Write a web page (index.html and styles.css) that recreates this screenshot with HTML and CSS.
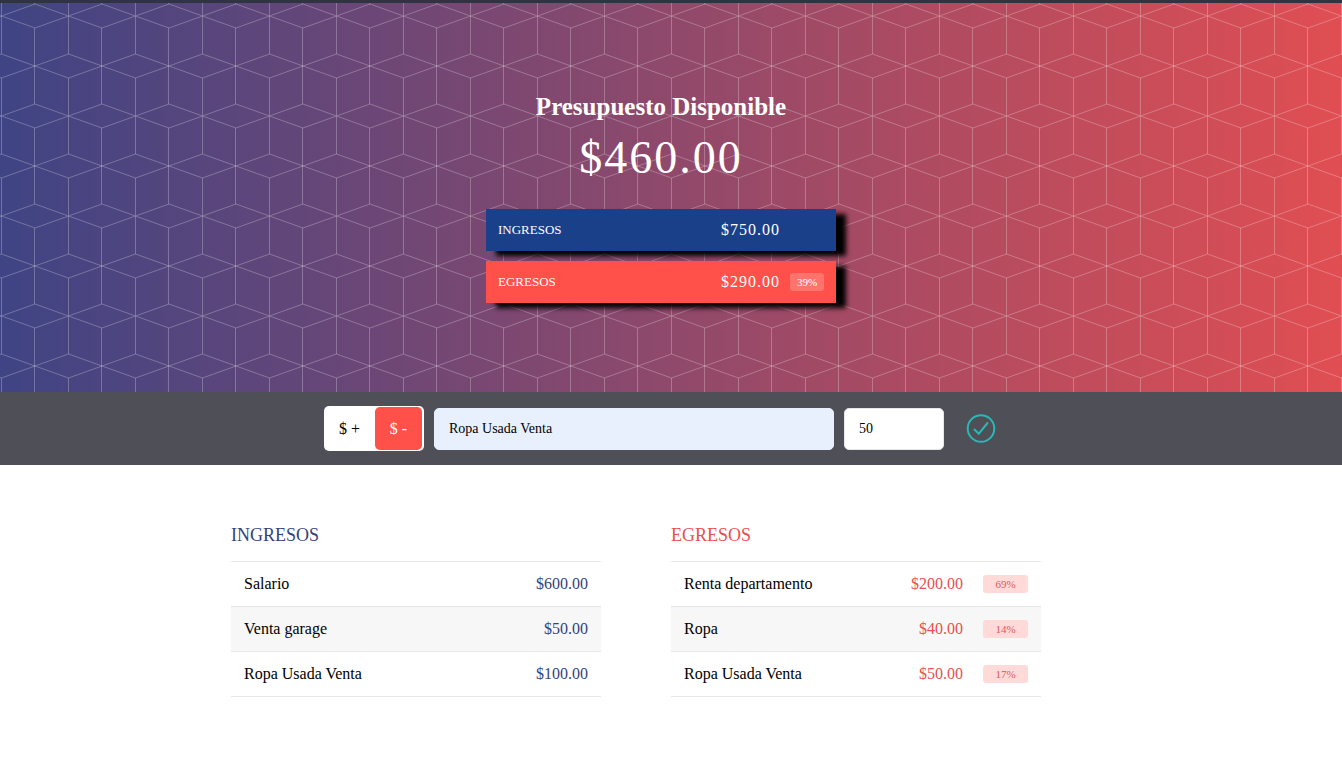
FILE: index.html
```html
<!DOCTYPE html>
<html lang="es">
<head>
<meta charset="utf-8">
<title>Presupuesto</title>
<link rel="stylesheet" href="styles.css">
</head>
<body>
<header class="hero">
  <svg class="hero-pattern" aria-hidden="true">
    <defs>
      <pattern id="cubes" width="67" height="100" patternUnits="userSpaceOnUse" x="1" y="13">
        <path d="M0.5 0L34 -12L67.5 0L34 12ZM0.5 100L34 88L67.5 100M-33 50L0.5 38L34 50L0.5 62ZM34 50L67.5 38L101 50L67.5 62Z M0.5 0V38M0.5 62V100M33.5 12V88" fill="none" stroke="#fff" stroke-opacity=".25"/>
      </pattern>
    </defs>
    <rect width="100%" height="100%" fill="url(#cubes)"/>
  </svg>
  <div class="summary">
    <h1 class="summary-title">Presupuesto Disponible</h1>
    <div class="summary-total">$460.00</div>
    <div class="bar bar-income">
      <div class="bar-label">INGRESOS</div>
      <div class="bar-value">$750.00</div>
    </div>
    <div class="bar bar-expense">
      <div class="bar-label">EGRESOS</div>
      <div class="bar-value">$290.00</div>
      <div class="bar-percent">39%</div>
    </div>
  </div>
</header>

<form class="entry">
  <div class="kind" role="radiogroup" aria-label="Tipo">
    <label class="kind-option"><input type="radio" name="kind" value="ingreso"><span class="kind-text">$ +</span></label>
    <label class="kind-option"><input type="radio" name="kind" value="egreso" checked><span class="kind-text">$ -</span></label>
  </div>
  <input class="field field-description" type="text" aria-label="Descripción" value="Ropa Usada Venta">
  <input class="field field-amount" type="text" inputmode="decimal" aria-label="Valor" value="50">
  <button class="submit" type="button" aria-label="Agregar">
    <svg width="30" height="30" viewBox="0 0 30 30" fill="none" stroke="#28b9b5" stroke-width="2" stroke-linecap="round" stroke-linejoin="round">
      <circle cx="15" cy="14.5" r="13.3"/>
      <path d="M8.5 15.5L12.7 19.8L21.5 9"/>
    </svg>
  </button>
</form>

<main class="lists">
  <section class="list list-income">
    <h2 class="list-title">INGRESOS</h2>
    <table class="items">
      <tr><td>Salario</td><td class="amount">$600.00</td></tr>
      <tr><td>Venta garage</td><td class="amount">$50.00</td></tr>
      <tr><td>Ropa Usada Venta</td><td class="amount">$100.00</td></tr>
    </table>
  </section>
  <section class="list list-expense">
    <h2 class="list-title">EGRESOS</h2>
    <table class="items">
      <tr><td>Renta departamento</td><td class="amount">$200.00</td><td class="share"><span class="tag">69%</span></td></tr>
      <tr><td>Ropa</td><td class="amount">$40.00</td><td class="share"><span class="tag">14%</span></td></tr>
      <tr><td>Ropa Usada Venta</td><td class="amount">$50.00</td><td class="share"><span class="tag">17%</span></td></tr>
    </table>
  </section>
</main>
</body>
</html>
```
FILE: styles.css
```css
* {
  box-sizing: border-box;
}

body {
  margin: 0;
  background: #fff;
  color: #000;
  font: 16px/20px "Liberation Serif", "Times New Roman", serif;
}

.hero {
  position: relative;
  border-top: 3px solid #303342;
  padding: 89px 20px 89px 0;
  background: linear-gradient(to right, #3f4484, #e04e52);
  color: #fff;
}

.hero-pattern {
  position: absolute;
  inset: 0;
  width: 100%;
  height: 100%;
}

.summary {
  position: relative;
  width: 350px;
  margin: 0 auto;
}

.summary-title {
  margin: 0 0 10px;
  font-size: 25px;
  line-height: 30px;
  text-align: center;
}

.summary-total {
  margin-bottom: 25px;
  font-size: 46px;
  line-height: 52px;
  letter-spacing: 2px;
  text-align: center;
}

.bar {
  display: flex;
  align-items: center;
  height: 42px;
  padding: 0 12px;
  box-shadow: 10px 5px 5px #000;
}

.bar-income {
  margin-bottom: 10px;
  padding-right: 56px;
  background: #1b408a;
}

.bar-expense {
  background: #ff5049;
}

.bar-label {
  flex: 1;
  font-size: 13px;
}

.bar-value {
  letter-spacing: 1px;
}

.bar-percent {
  width: 34px;
  margin-left: 10px;
  border-radius: 3px;
  background: rgba(255, 255, 255, 0.2);
  font-size: 11px;
  line-height: 18px;
  text-align: center;
}

.entry {
  display: flex;
  align-items: center;
  justify-content: center;
  gap: 10px;
  padding: 14px 22px 14px 0;
  background: #4f4f58;
}

.kind {
  display: flex;
  width: 100px;
  height: 45px;
  padding: 1px;
  border-radius: 5px;
  background: #fff;
}

.kind-option {
  position: relative;
  display: flex;
  flex: 1;
}

.kind-option input {
  position: absolute;
  opacity: 0;
}

.kind-text {
  flex: 1;
  border-radius: 5px;
  line-height: 43px;
  text-align: center;
}

.kind-option input:checked + .kind-text {
  margin: 0 1px;
  background: #ff5049;
  color: #fff;
}

.field {
  height: 42px;
  padding: 0 14px;
  border: 1px solid #e7e7e7;
  border-radius: 5px;
  background: #fff;
  color: #000;
  font: 14px/20px "Liberation Serif", "Times New Roman", serif;
}

.field-description {
  width: 400px;
  border-color: #e8f0fe;
  background: #e8f0fe;
}

.field-amount {
  width: 100px;
}

.submit {
  display: flex;
  margin-left: 12px;
  padding: 0;
  border: 0;
  background: none;
  cursor: pointer;
}

.lists {
  display: flex;
  max-width: 880px;
  margin: 0 auto;
  padding: 60px 0;
}

.list {
  flex: 1;
  margin-right: 70px;
}

.list-title {
  margin: 0 0 16px;
  font-size: 18px;
  font-weight: 400;
}

.list-income .list-title,
.list-income .amount {
  color: #34427c;
}

.list-expense .list-title,
.list-expense .amount {
  color: #e84f50;
}

.items {
  width: 100%;
  border-collapse: collapse;
  border-bottom: 1px solid #e7e7e7;
}

.items td {
  height: 45px;
  padding: 0 13px;
  border-top: 1px solid #e7e7e7;
}

.items tr:nth-child(even) {
  background: #f7f7f7;
}

.items .amount {
  text-align: right;
}

.items .share {
  width: 65px;
  padding-left: 7px;
}

.tag {
  display: block;
  width: 45px;
  border-radius: 3px;
  background: #ffdad9;
  color: #d6595f;
  font-size: 11px;
  line-height: 18px;
  text-align: center;
}
```
